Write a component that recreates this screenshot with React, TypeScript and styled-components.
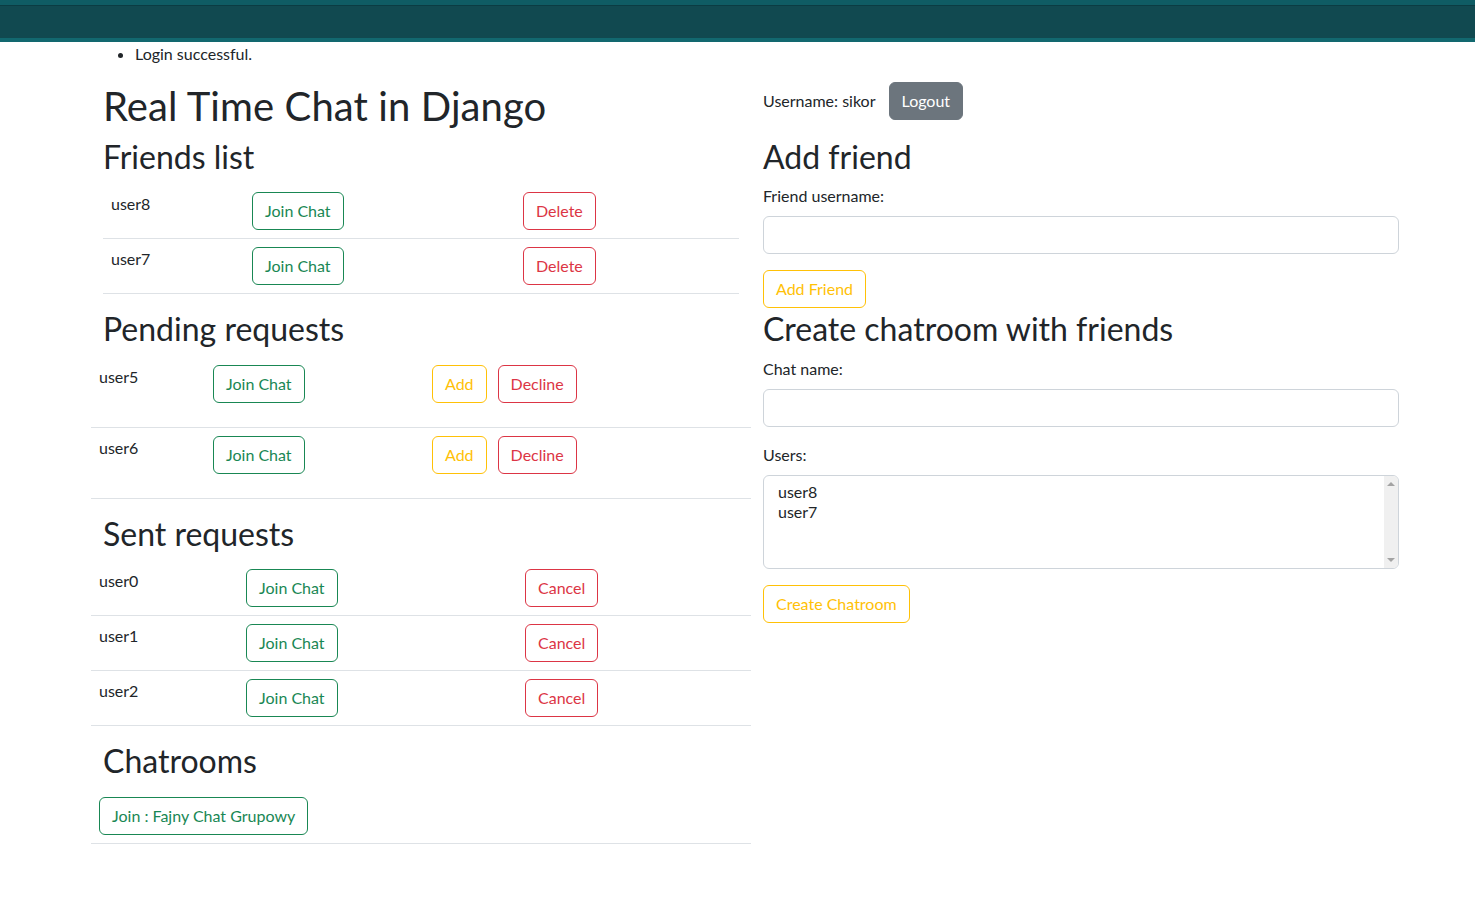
import React from 'react';
import styled, { createGlobalStyle, css } from 'styled-components';

const GlobalStyle = createGlobalStyle`
  * {
    box-sizing: border-box;
  }
  body {
    margin: 0;
    background: #fff;
    color: #212529;
    font-family: Lato, "Noto Sans", sans-serif;
    font-size: 16px;
    line-height: 1.5;
  }
`;

const Navbar = styled.nav`
  height: 42px;
  background: #114950;
  border-top: 5px solid #0f5c64;
  border-bottom: 4px solid #12686f;
  box-shadow: inset 0 1px 0 #0b3c43;
`;

const Messages = styled.ul`
  margin: 0 0 16px 103px;
  padding-left: 32px;
`;

const Layout = styled.div`
  display: grid;
  grid-template-columns: 660px 636px;
  column-gap: 12px;
  margin-left: 91px;
`;

const Column = styled.div`
  display: flex;
  flex-direction: column;
`;

const Title = styled.h1`
  margin: 0 0 8px 12px;
  font-size: 40px;
  font-weight: 400;
  line-height: 1.2;
  letter-spacing: 0.1px;
`;

const Heading = styled.h2<{ $indent?: boolean }>`
  margin: 0 0 8px ${(p) => (p.$indent ? '12px' : '0')};
  font-size: 32px;
  font-weight: 400;
  line-height: 1.2;
`;

const Table = styled.div<{ $inset?: boolean }>`
  margin: 0 ${(p) => (p.$inset ? '12px' : '0')} 16px;
`;

const Row = styled.div<{ $cols: string; $tall?: boolean }>`
  display: grid;
  grid-template-columns: ${(p) => p.$cols};
  border-bottom: 1px solid #dee2e6;
  padding: 8px 0 ${(p) => (p.$tall ? '24px' : '8px')};
`;

const Cell = styled.div`
  display: flex;
  align-items: flex-start;
  gap: 11px;
  padding: 0 8px;
`;

const UserName = styled.span`
  line-height: 24px;
`;

type Tone = 'success' | 'danger' | 'warning' | 'secondary';

const tones: Record<Tone, string> = {
  success: '#198754',
  danger: '#dc3545',
  warning: '#ffc107',
  secondary: '#6c757d',
};

const Button = styled.button<{ $tone: Tone; $solid?: boolean }>`
  display: inline-block;
  height: 38px;
  padding: 6px 12px;
  font-family: inherit;
  font-size: 16px;
  line-height: 24px;
  border-radius: 6px;
  border: 1px solid ${(p) => tones[p.$tone]};
  cursor: pointer;
  white-space: nowrap;
  ${(p) =>
    p.$solid
      ? css`
          background: ${tones[p.$tone]};
          color: #fff;
        `
      : css`
          background: transparent;
          color: ${tones[p.$tone]};
        `}
`;

const UserBar = styled.div`
  display: flex;
  align-items: center;
  gap: 13px;
  margin-bottom: 18px;
`;

const Label = styled.label`
  display: block;
  margin-bottom: 8px;
`;

const Input = styled.input`
  display: block;
  width: 100%;
  height: 38px;
  padding: 6px 12px;
  border: 1px solid #ced4da;
  border-radius: 6px;
  font-family: inherit;
  font-size: 16px;
  margin-bottom: 16px;
`;

const FormButtonRow = styled.div<{ $gap?: number }>`
  margin-bottom: ${(p) => p.$gap ?? 0}px;
`;

const Listbox = styled.div`
  display: flex;
  height: 94px;
  border: 1px solid #ced4da;
  border-radius: 6px;
  margin-bottom: 16px;
  overflow: hidden;
`;

const Options = styled.div`
  flex: 1;
  padding: 6px 12px;
`;

const Option = styled.div`
  line-height: 20px;
  padding: 0 2px;
`;

const Scrollbar = styled.div`
  width: 14px;
  background: #f0f0f0;
  display: flex;
  flex-direction: column;
  justify-content: space-between;
  align-items: center;
  padding: 6px 0;
`;

const Arrow = styled.span<{ $down?: boolean }>`
  width: 0;
  height: 0;
  border-left: 4px solid transparent;
  border-right: 4px solid transparent;
  ${(p) =>
    p.$down
      ? css`
          border-top: 4px solid #a3a3a3;
        `
      : css`
          border-bottom: 4px solid #a3a3a3;
        `}
`;

const friends = ['user8', 'user7'];
const pending = ['user5', 'user6'];
const sent = ['user0', 'user1', 'user2'];

export default function App() {
  return (
    <>
      <GlobalStyle />
      <Navbar />
      <Messages>
        <li>Login successful.</li>
      </Messages>
      <Layout>
        <Column>
          <Title>Real Time Chat in Django</Title>
          <Heading $indent>Friends list</Heading>
          <Table $inset>
            {friends.map((u) => (
              <Row key={u} $cols="141px 271px 1fr">
                <Cell>
                  <UserName>{u}</UserName>
                </Cell>
                <Cell>
                  <Button $tone="success">Join Chat</Button>
                </Cell>
                <Cell>
                  <Button $tone="danger">Delete</Button>
                </Cell>
              </Row>
            ))}
          </Table>

          <Heading $indent>Pending requests</Heading>
          <Table>
            {pending.map((u) => (
              <Row key={u} $cols="114px 219px 1fr" $tall>
                <Cell>
                  <UserName>{u}</UserName>
                </Cell>
                <Cell>
                  <Button $tone="success">Join Chat</Button>
                </Cell>
                <Cell>
                  <Button $tone="warning">Add</Button>
                  <Button $tone="danger">Decline</Button>
                </Cell>
              </Row>
            ))}
          </Table>

          <Heading $indent>Sent requests</Heading>
          <Table>
            {sent.map((u) => (
              <Row key={u} $cols="147px 279px 1fr">
                <Cell>
                  <UserName>{u}</UserName>
                </Cell>
                <Cell>
                  <Button $tone="success">Join Chat</Button>
                </Cell>
                <Cell>
                  <Button $tone="danger">Cancel</Button>
                </Cell>
              </Row>
            ))}
          </Table>

          <Heading $indent>Chatrooms</Heading>
          <Table>
            <Row $cols="1fr">
              <Cell>
                <Button $tone="success">Join : Fajny Chat Grupowy</Button>
              </Cell>
            </Row>
          </Table>
        </Column>

        <Column>
          <UserBar>
            <span>Username: sikor</span>
            <Button $tone="secondary" $solid>
              Logout
            </Button>
          </UserBar>

          <Heading>Add friend</Heading>
          <Label htmlFor="friend">Friend username:</Label>
          <Input id="friend" type="text" />
          <FormButtonRow $gap={2}>
            <Button $tone="warning">Add Friend</Button>
          </FormButtonRow>

          <Heading>Create chatroom with friends</Heading>
          <Label htmlFor="chatname">Chat name:</Label>
          <Input id="chatname" type="text" />
          <Label>Users:</Label>
          <Listbox>
            <Options>
              {friends.map((u) => (
                <Option key={u}>{u}</Option>
              ))}
            </Options>
            <Scrollbar>
              <Arrow />
              <Arrow $down />
            </Scrollbar>
          </Listbox>
          <FormButtonRow>
            <Button $tone="warning">Create Chatroom</Button>
          </FormButtonRow>
        </Column>
      </Layout>
    </>
  );
}
